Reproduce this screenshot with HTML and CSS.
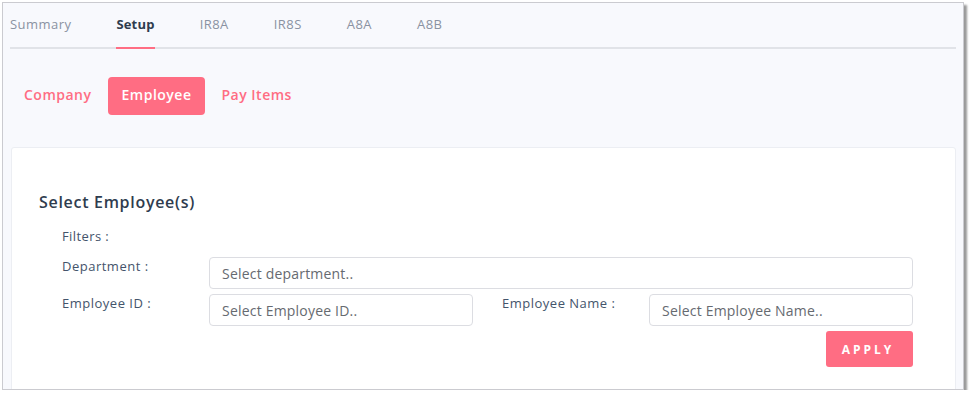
FILE: index.html
```
<!DOCTYPE html>
<html lang="en">
<head>
    <meta charset="UTF-8">
    <title>IRAS Setup - Employee</title>
    <link rel="stylesheet" href="styles.css">
</head>
<body>
    <div class="frame">
        <nav class="tabs">
            <a class="tab">Summary</a>
            <a class="tab active">Setup</a>
            <a class="tab">IR8A</a>
            <a class="tab">IR8S</a>
            <a class="tab">A8A</a>
            <a class="tab">A8B</a>
        </nav>
        <div class="pills">
            <a class="pill">Company</a>
            <a class="pill active">Employee</a>
            <a class="pill">Pay Items</a>
        </div>
        <div class="card">
            <h2>Select Employee(s)</h2>
            <div class="filters">
                <div class="filters-title">Filters :</div>
                <form class="filter-grid" autocomplete="off">
                    <label for="dept">Department :</label>
                    <input type="text" id="dept" class="field wide" placeholder="Select department..">
                    <label for="empId">Employee ID :</label>
                    <input type="text" id="empId" class="field" placeholder="Select Employee ID..">
                    <label for="empName" class="label-right">Employee Name :</label>
                    <input type="text" id="empName" class="field" placeholder="Select Employee Name..">
                    <button type="submit" class="apply">APPLY</button>
                </form>
            </div>
        </div>
    </div>
</body>
</html>
```

FILE: styles.css
```
:root {
    --pink: #ff6d83;
    --text-dark: #2f3c4e;
    --text-label: #44546b;
    --text-muted: #8a92a2;
    --border: #dcdde2;
    --bg-page: #f8f9fd;
}
html, body {
    margin: 0;
    padding: 0;
    background: #ffffff;
    font-family: 'Open Sans', Arial, sans-serif;
}
.frame {
    margin: 2px 0 0 2px;
    width: 960px;
    height: 386px;
    border: 1px solid #cbcbd0;
    background: var(--bg-page);
    box-shadow: 3px 3px 2px #9a9a9a;
    overflow: hidden;
}
/* Top tabs */
.tabs {
    display: flex;
    gap: 45px;
    margin: 0 7px 0 7px;
    border-bottom: 2px solid #e1e3e8;
}
.tab {
    position: relative;
    height: 44px;
    line-height: 42px;
    font-size: 13px;
    letter-spacing: 0.45px;
    color: var(--text-muted);
    cursor: pointer;
}
.tab.active {
    color: var(--text-dark);
    font-weight: 700;
    letter-spacing: 0.2px;
}
.tab.active::after {
    content: "";
    position: absolute;
    left: 0;
    right: 0;
    bottom: -2px;
    height: 2px;
    background: var(--pink);
}
/* Sub navigation */
.pills {
    display: flex;
    gap: 2px;
    margin: 28px 0 0 7px;
}
.pill {
    height: 38px;
    line-height: 36px;
    padding: 0 14px;
    border-radius: 4px;
    font-size: 14px;
    font-weight: 600;
    letter-spacing: 0.5px;
    color: var(--pink);
    cursor: pointer;
}
.pill.active {
    background: var(--pink);
    color: #ffffff;
}
/* Card */
.card {
    margin: 32px 7px 0 8px;
    height: 260px;
    background: #ffffff;
    border: 1px solid #eceef3;
    border-radius: 3px;
    padding: 0 42px 0 27px;
}
.card h2 {
    margin: 44px 0 0 0;
    font-size: 16px;
    font-weight: 600;
    letter-spacing: 0.7px;
    color: var(--text-dark);
    line-height: 20px;
}
.filters {
    padding-left: 23px;
}
.filters-title {
    margin-top: 15px;
    font-size: 13px;
    letter-spacing: 0.4px;
    color: var(--text-label);
    line-height: 18px;
}
.filter-grid {
    display: grid;
    grid-template-columns: 147px 264px 176px 1fr;
    row-gap: 5px;
    margin-top: 12px;
}
.filter-grid label {
    font-size: 13px;
    letter-spacing: 0.5px;
    line-height: 18px;
    color: var(--text-label);
}
.filter-grid .label-right {
    padding-left: 29px;
}
.field {
    box-sizing: border-box;
    height: 32px;
    width: 100%;
    margin: 0;
    padding: 0 12px;
    border: 1px solid var(--border);
    border-radius: 4px;
    font-family: inherit;
    font-size: 14px;
    letter-spacing: 0.2px;
    color: #555;
    background: #ffffff;
}
.field::placeholder {
    color: #666a70;
}
.field.wide {
    grid-column: 2 / -1;
}
.apply {
    grid-column: 4;
    justify-self: end;
    width: 87px;
    height: 36px;
    border: none;
    border-radius: 3px;
    background: var(--pink);
    color: #ffffff;
    font-family: inherit;
    font-size: 12px;
    font-weight: 700;
    letter-spacing: 3px;
    padding-left: 3px;
    cursor: pointer;
}
```
